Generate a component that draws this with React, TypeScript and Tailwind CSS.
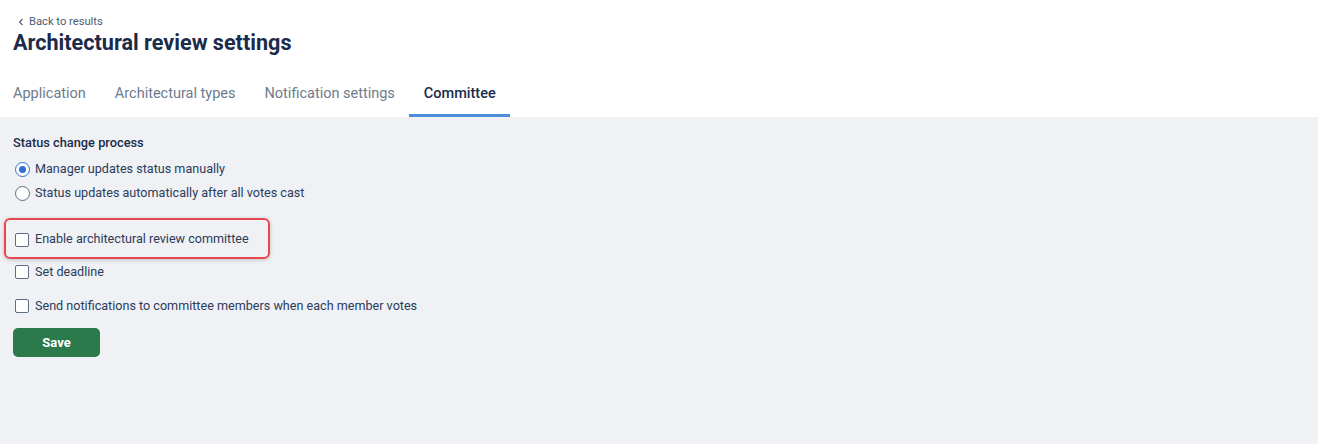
import React, { useState } from 'react';

const tabs = ['Application', 'Architectural types', 'Notification settings', 'Committee'];

type checkType = {
  id: string
  label: string
}

const checks: checkType[] = [
  { id: 'committee', label: 'Enable architectural review committee' },
  { id: 'deadline', label: 'Set deadline' },
  { id: 'notify', label: 'Send notifications to committee members when each member votes' },
];

const Radio = ({ checked, label, onClick }: { checked: boolean, label: string, onClick: () => void }) => (
  <div className="flex items-center h-6 cursor-pointer" onClick={onClick}>
    <span className={`w-[15px] h-[15px] rounded-full border-[1.5px] flex items-center justify-center mr-[5px] ${checked ? 'border-[#2f6fd0] bg-white' : 'border-[#5f6d80] bg-white'}`}>
      {checked && <span className="w-[7px] h-[7px] rounded-full bg-[#2f6fd0]"></span>}
    </span>
    <span className="text-[12.6px] text-[#2b3c5a]">{label}</span>
  </div>
);

const Check = ({ checked, label, onClick }: { checked: boolean, label: string, onClick: () => void }) => (
  <div className="flex items-center h-6 cursor-pointer" onClick={onClick}>
    <span className={`w-[14px] h-[14px] rounded-[2px] border-[1.5px] border-[#5f6d80] mr-[6px] ${checked ? 'bg-[#2f6fd0]' : 'bg-white'}`}></span>
    <span className="text-[12.6px] text-[#2b3c5a]">{label}</span>
  </div>
);

export default function App() {
  const [status, setStatus] = useState('manual');
  const [values, setValues] = useState<Record<string, boolean>>({});

  return (
    <div className="w-[1318px] h-[444px] flex flex-col bg-[#eff1f5]" style={{ fontFamily: 'Roboto, "Liberation Sans", sans-serif' }}>
      <div className="bg-white px-[13px]">
        <div className="flex items-center pt-[15px] pl-[4px] text-[11.2px] text-[#4b5b70] h-[14px] box-content">
          <svg width="8" height="8" viewBox="0 0 8 8" className="mr-[4px]">
            <path d="M5.5 1 L2.5 4 L5.5 7" fill="none" stroke="#4b5b70" strokeWidth="1.1" />
          </svg>
          Back to results
        </div>
        <h1 className="text-[21.6px] font-bold text-[#1b2b4b] leading-[28px] mt-[0px]">Architectural review settings</h1>
        <div className="flex mt-[26px]">
          {tabs.map((tab, i) => (
            <div
              key={tab}
              className={`h-[34px] text-[14.5px] pr-[14px] ${i === 0 ? 'pl-0' : 'pl-[15px]'} ${tab === 'Committee' ? 'text-[#1b2b4b] font-medium border-b-[3px] border-[#4a8fdc]' : 'text-[#6d7b8d] border-b-[3px] border-transparent'}`}
            >
              {tab}
            </div>
          ))}
        </div>
      </div>
      <div className="px-[13px] pt-[17px] flex flex-col">
        <div className="text-[12.8px] font-medium text-[#1b2b4b] leading-[18px]">Status change process</div>
        <div className="mt-[5px] pl-[2px]">
          <Radio checked={status === 'manual'} label="Manager updates status manually" onClick={() => setStatus('manual')} />
          <Radio checked={status === 'auto'} label="Status updates automatically after all votes cast" onClick={() => setStatus('auto')} />
        </div>
        <div className="mt-[13px] -ml-[9px] w-[266px] h-[41px] pl-[9px] pt-[2px] flex items-center border-2 border-[#e8474f] rounded-[6px] shadow-[0_1px_4px_rgba(0,0,0,0.2)]">
          <Check checked={!!values[checks[0].id]} label={checks[0].label} onClick={() => setValues({ ...values, [checks[0].id]: !values[checks[0].id] })} />
        </div>
        <div className="pl-[2px] flex flex-col gap-[10px] mt-[1px]">
          {checks.slice(1).map(c => (
            <Check key={c.id} checked={!!values[c.id]} label={c.label} onClick={() => setValues({ ...values, [c.id]: !values[c.id] })} />
          ))}
        </div>
        <button className="mt-[10px] w-[87px] h-[29px] rounded-[5px] bg-[#2a7a4c] text-white text-[13px] font-bold">Save</button>
      </div>
    </div>
  );
}
